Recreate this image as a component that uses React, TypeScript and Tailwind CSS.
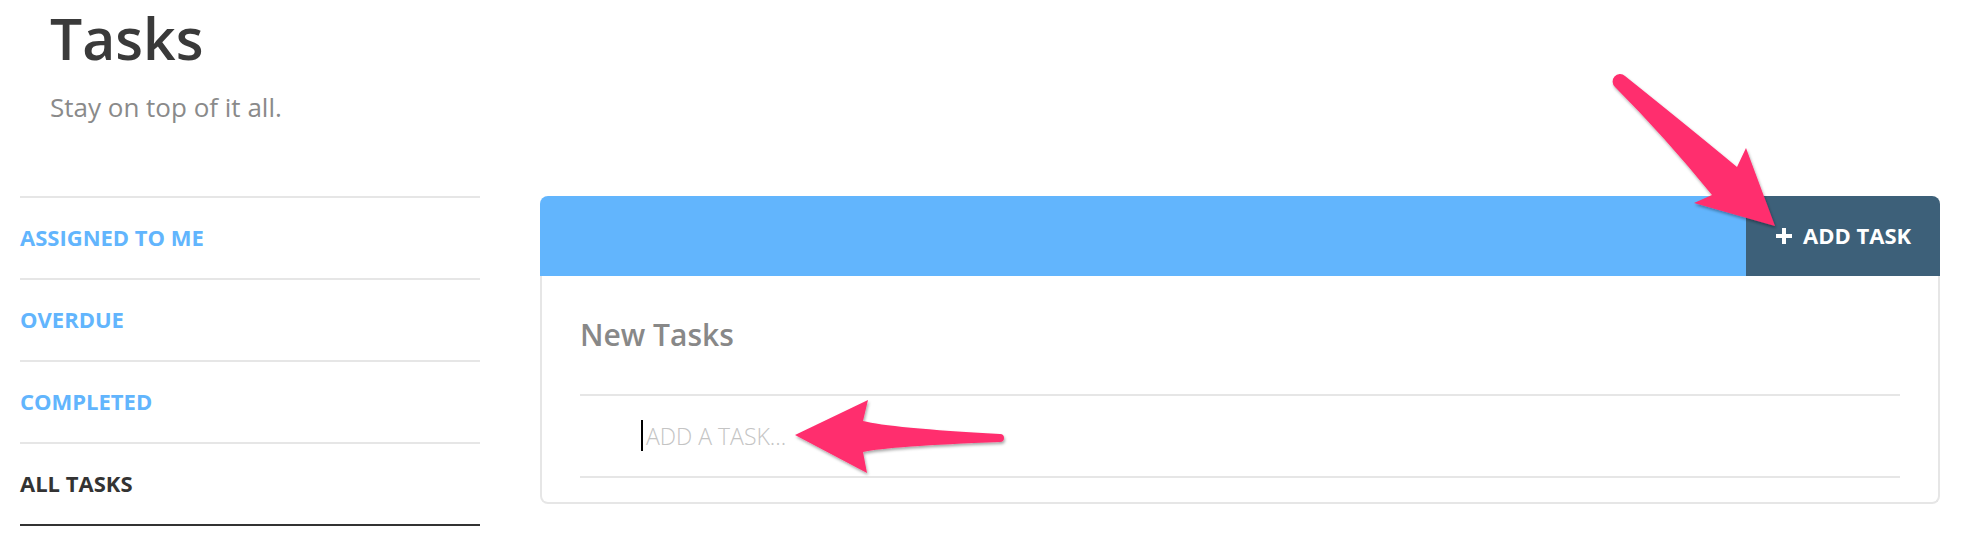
const filters = ['Assigned to me', 'Overdue', 'Completed'];

export default function App() {
  return (
    <div className="relative h-[542px] w-[1968px] overflow-hidden bg-white font-['Open_Sans',sans-serif]">
      <header className="pl-[50px]">
        <h1 className="text-[57px] font-semibold leading-[1.36] text-[#3a3a3a]">Tasks</h1>
        <p className="mt-[11px] text-[26px] leading-[1.4] text-[#8a8a8a]">Stay on top of it all.</p>
      </header>

      <div className="mt-[71px] flex items-start gap-[60px] pl-5 pr-7">
        <nav className="w-[460px]">
          {filters.map((label) => (
            <div key={label} className="flex h-[82px] items-center border-t-2 border-[#e6e6e6] text-[22px] font-bold uppercase text-[#62b5fd]">
              {label}
            </div>
          ))}
          <div className="flex h-[84px] items-center border-y-2 border-t-[#e6e6e6] border-b-[#333] text-[22px] font-bold uppercase text-[#333]">
            All tasks
          </div>
        </nav>

        <section className="flex-1">
          <div className="flex h-20 overflow-hidden rounded-t-lg">
            <div className="flex-1 bg-[#62b5fd]" />
            <button className="flex w-[194px] items-center gap-[11px] bg-[#3d6079] pl-[30px] text-[22px] font-bold text-white">
              <svg width="16" height="16" viewBox="0 0 16 16" stroke="currentColor" strokeWidth="4">
                <path d="M8 0v16M0 8h16" />
              </svg>
              ADD TASK
            </button>
          </div>
          <div className="rounded-b-lg border-x-2 border-b-2 border-[#e6e6e6] px-[38px] pb-6 pt-[39px]">
            <h2 className="mb-10 text-[30px] font-semibold leading-[1.3] text-[#888]">New Tasks</h2>
            <div className="flex h-[84px] items-center border-y-2 border-[#e6e6e6] pl-[61px]">
              <span className="h-[31px] w-[2px] bg-black" />
              <span className="ml-[3px] text-[23px] font-light text-[#c4c4c4]">ADD A TASK...</span>
            </div>
          </div>
        </section>
      </div>

      {/* annotation arrows */}
      <svg className="pointer-events-none absolute left-0 top-0" width="1968" height="542" viewBox="0 0 1968 542">
        <defs>
          <filter id="shadow" x="-20%" y="-20%" width="140%" height="140%">
            <feDropShadow dx="1" dy="2" stdDeviation="1.5" floodColor="#000" floodOpacity="0.35" />
          </filter>
        </defs>
        <g fill="#ff2e6e" filter="url(#shadow)">
          <path d="M1625 76 Q1690 128 1737 167 L1746 148 L1775 226 L1694 203 L1712 195 Q1664 136 1615 87 A6.5 6.5 0 0 1 1625 76 Z" />
          <path d="M795 435 L868 400 L863 421 Q890 428 1000 434 A4 4 0 0 1 1000 442 Q890 446 863 452 L867 473 Z" />
        </g>
      </svg>
    </div>
  );
}
